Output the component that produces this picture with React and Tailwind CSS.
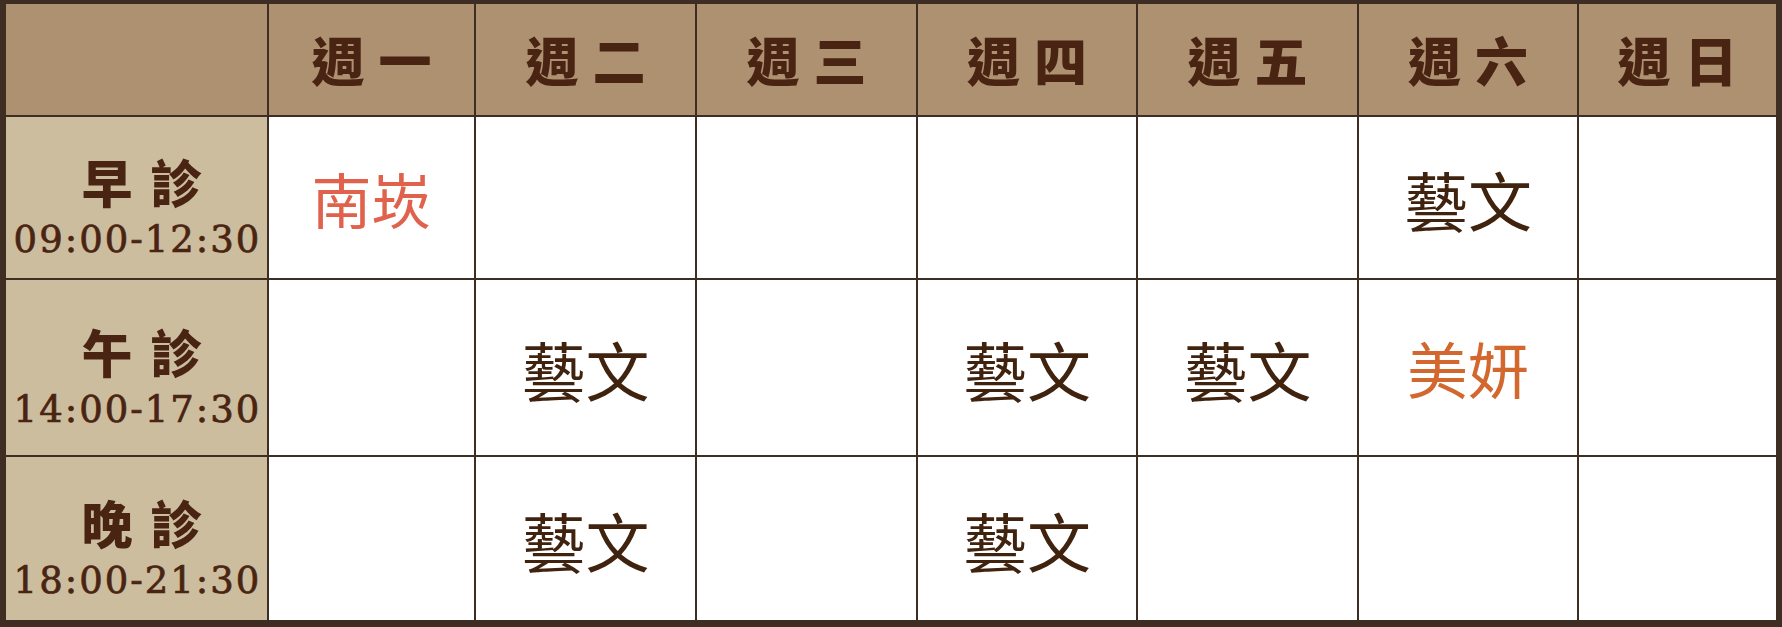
import React from "react";

const days = ["週一", "週二", "週三", "週四", "週五", "週六", "週日"];

const slots = [
  {
    name: "早診",
    time: "09:00-12:30",
    cells: [
      { text: "南崁", color: "text-[#e0614c]", size: "text-[60px]" },
      null,
      null,
      null,
      null,
      { text: "藝文" },
      null,
    ],
  },
  {
    name: "午診",
    time: "14:00-17:30",
    cells: [
      null,
      { text: "藝文" },
      null,
      { text: "藝文" },
      { text: "藝文" },
      { text: "美妍", color: "text-[#d3682f]", size: "text-[61px]" },
      null,
    ],
  },
  {
    name: "晚診",
    time: "18:00-21:30",
    cells: [null, { text: "藝文" }, null, { text: "藝文" }, null, null, null],
  },
];

const cjk = "font-['Noto_Sans_CJK_TC','Noto_Sans_CJK_SC',sans-serif]";

export default function App() {
  return (
    <div className="w-[1782px] h-[627px] bg-white">
      <div className="grid grid-cols-[261px_205px_219px_219px_218px_219px_218px_197px] grid-rows-[111px_161px_175px_163px] gap-[2px] bg-[#3d2d23] pt-[4px] px-[6px] pb-[7px] h-full">
        {/* header */}
        <div className="bg-[#ad9171]"></div>
        {days.map((d) => (
          <div
            key={d}
            className="bg-[#ad9171] flex items-center justify-center"
          >
            <span
              className={`${cjk} text-[53px] font-black leading-none tracking-[14px] pl-[14px] text-[#4a2412]`}
            >
              {d}
            </span>
          </div>
        ))}

        {/* rows */}
        {slots.map((s) => (
          <React.Fragment key={s.name}>
            <div className="bg-[#cbbd9d] flex flex-col items-center justify-center pt-[18px] text-[#4a2412]">
              <span
                className={`${cjk} text-[51px] font-black leading-none tracking-[18px] pl-[28px]`}
              >
                {s.name}
              </span>
              <span className="font-['DejaVu_Serif',serif] text-[37px] leading-none tracking-[2px] pl-[2px] mt-[14px] [-webkit-text-stroke:0.7px_#4a2412]">
                {s.time}
              </span>
            </div>
            {s.cells.map((c, i) => (
              <div key={i} className="bg-white flex items-center justify-center">
                {c && (
                  <span
                    className={`${cjk} ${c.size || "text-[64px]"} font-normal leading-none ${
                      c.color || "text-[#40230f]"
                    }`}
                  >
                    {c.text}
                  </span>
                )}
              </div>
            ))}
          </React.Fragment>
        ))}
      </div>
    </div>
  );
}
